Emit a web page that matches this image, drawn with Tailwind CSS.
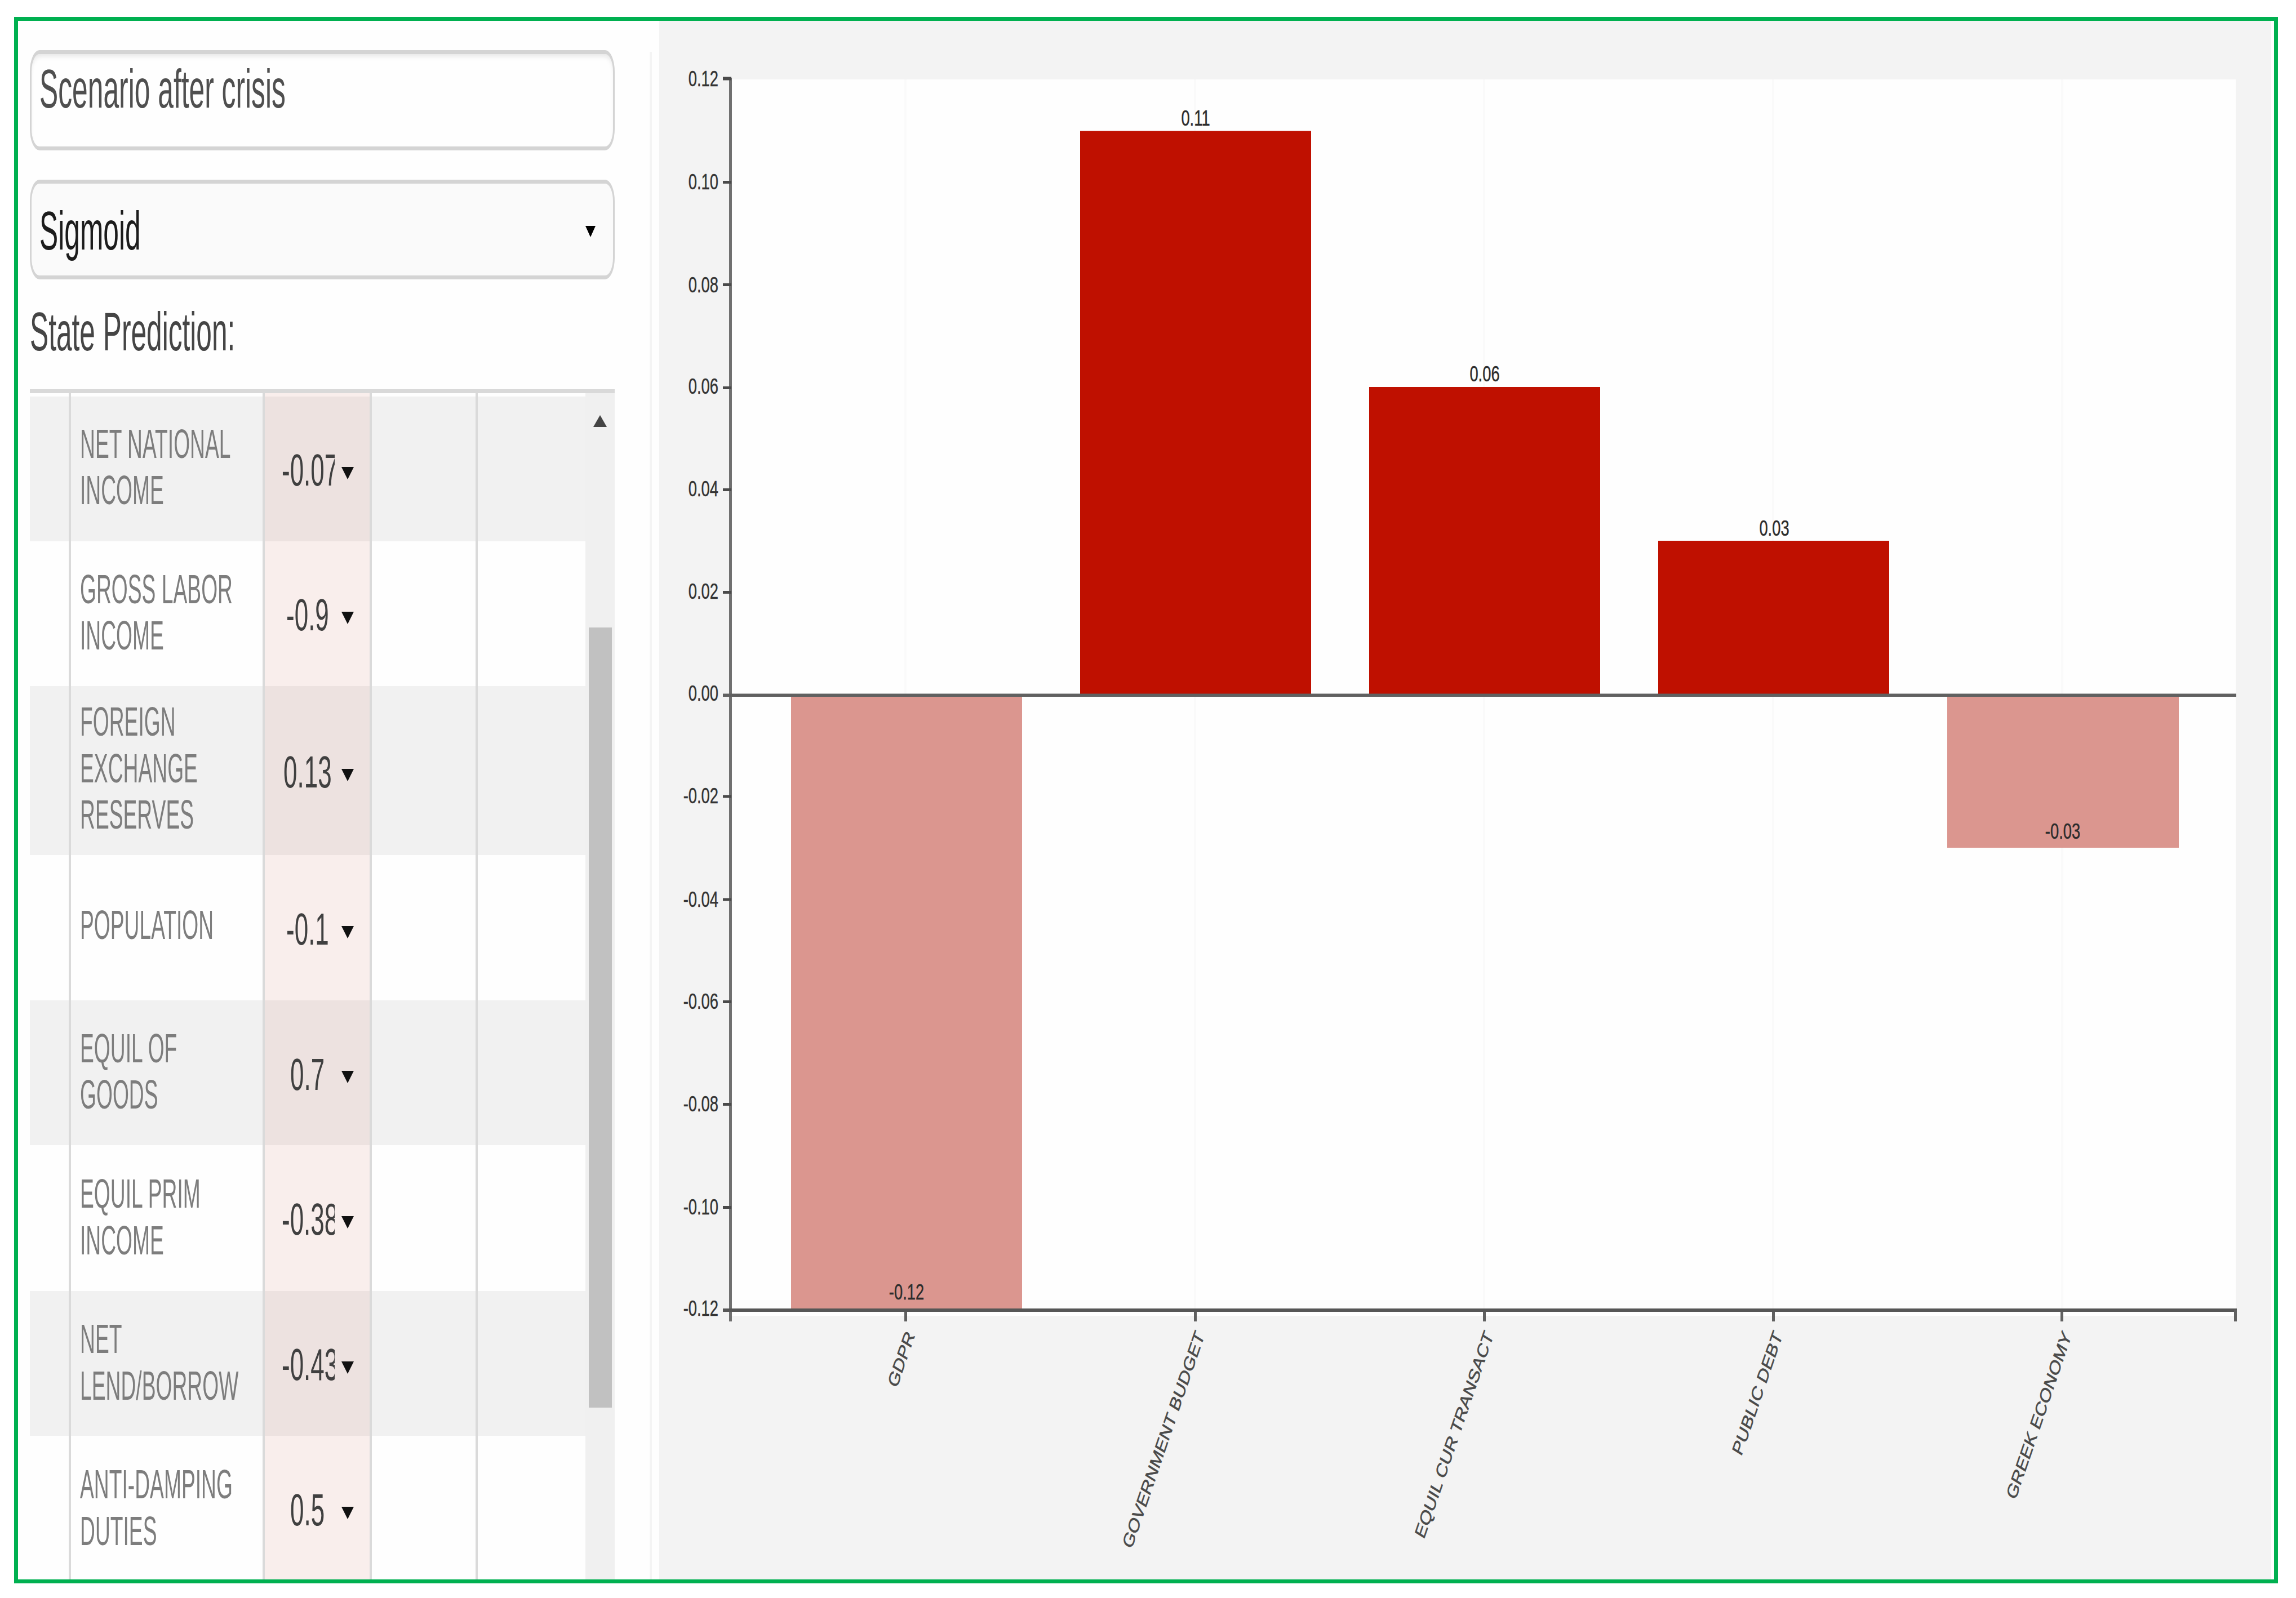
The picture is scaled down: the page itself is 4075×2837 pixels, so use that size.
<!DOCTYPE html>
<html lang="en">
<head>
<meta charset="utf-8">
<title>Scenario after crisis</title>
<script src="https://cdn.jsdelivr.net/npm/@tailwindcss/browser@4"></script>
</head>
<body class="bg-white overflow-hidden font-['Liberation_Sans',Arial,sans-serif]">
<div class="pl-[25px] pt-[30px]">
<main class="flex w-[4018px] h-[2781px] border-7 border-[#00b050] bg-[#fefefe] overflow-hidden">

  <!-- Scenario controls -->
  <section class="flex flex-col w-[1121px] shrink-0 pl-[21px] pt-[52px]">
    <div class="flex items-center w-[1038px] h-[178px] shrink-0 rounded-[17px/38px] border-x-3 border-y-7 border-[#d4d4d4] bg-[#fefefe] pl-[14px] pb-[41px] shadow-[inset_0_7px_8px_-3px_#e6e6e6]">
      <span class="whitespace-nowrap origin-left scale-x-[0.513] text-[97px] leading-none text-[#4f4f4f]">Scenario after crisis</span>
    </div>
    <div class="flex items-center justify-between w-[1038px] h-[177px] shrink-0 mt-[52px] rounded-[17px/38px] border-x-3 border-y-7 border-[#d4d4d4] bg-[#fafafa] pl-[14px] pr-[31px]">
      <span class="whitespace-nowrap origin-left scale-x-[0.513] text-[97px] leading-none text-[#1c1c1c] pt-[3px]">Sigmoid</span>
      <svg class="w-[18px] h-[20px] mt-[6px]" viewBox="0 0 18 20"><path d="M0 0H18L9 20Z" fill="#000"/></svg>
    </div>
    <div class="flex items-center h-[195px] shrink-0 pb-[10px]">
      <span class="whitespace-nowrap origin-left scale-x-[0.512] text-[97px] leading-none text-[#454545]">State Prediction:</span>
    </div>

    <!-- Concept table -->
    <div class="flex w-[1038px] h-[2113px] shrink-0 border-t-7 border-[#d9d9d9] overflow-hidden">
      <div class="w-[986px] shrink-0 text-[72px] leading-[82.4px] text-[#7d7d7d]">
        <div class="flex h-[6px]"><div class="w-[73px] border-r-4 border-[#dadada]"></div><div class="w-[344px] border-r-4 border-[#dadada]"></div><div class="w-[190px] border-r-4 border-[#dadada] bg-[#f9eeec]"></div><div class="w-[188px] border-r-4 border-[#dadada]"></div></div>

        <div class="flex h-[257px] bg-[#f1f1f1]">
          <div class="w-[73px] shrink-0 border-r-4 border-[#dadada]"></div>
          <div class="flex items-center w-[344px] shrink-0 border-r-4 border-[#dadada] pl-[16px] pb-[7px]"><span class="shrink-0 whitespace-nowrap origin-left scale-x-[0.517]">NET NATIONAL<br>INCOME</span></div>
          <div class="flex items-center w-[190px] shrink-0 border-r-4 border-[#dadada] bg-[#ede2e0] pl-[30px]">
            <div class="flex w-[94px] overflow-hidden pt-[6px]"><span class="shrink-0 origin-left scale-x-[0.55] text-[80px] text-[#404040]">-0.07</span></div>
            <svg class="w-[22px] h-[22px] ml-[12px] mt-[15px]" viewBox="0 0 22 22"><path d="M0 0H22L11 22Z" fill="#111"/></svg>
          </div>
          <div class="w-[188px] shrink-0 border-r-4 border-[#dadada]"></div>
        </div>

        <div class="flex h-[257px] bg-[#fefefe]">
          <div class="w-[73px] shrink-0 border-r-4 border-[#dadada]"></div>
          <div class="flex items-center w-[344px] shrink-0 border-r-4 border-[#dadada] pl-[16px] pb-[5px]"><span class="shrink-0 whitespace-nowrap origin-left scale-x-[0.517]">GROSS LABOR<br>INCOME</span></div>
          <div class="flex items-center w-[190px] shrink-0 border-r-4 border-[#dadada] bg-[#f9eeec] pl-[29px]">
            <div class="flex justify-center w-[94px] pt-[6px]"><span class="shrink-0 scale-x-[0.55] text-[80px] text-[#404040]">-0.9</span></div>
            <svg class="w-[22px] h-[22px] ml-[13px] mt-[15px]" viewBox="0 0 22 22"><path d="M0 0H22L11 22Z" fill="#111"/></svg>
          </div>
          <div class="w-[188px] shrink-0 border-r-4 border-[#dadada]"></div>
        </div>

        <div class="flex h-[300px] bg-[#f1f1f1]">
          <div class="w-[73px] shrink-0 border-r-4 border-[#dadada]"></div>
          <div class="flex items-center w-[344px] shrink-0 border-r-4 border-[#dadada] pl-[16px] pb-[8px]"><span class="shrink-0 whitespace-nowrap origin-left scale-x-[0.517]">FOREIGN<br>EXCHANGE<br>RESERVES</span></div>
          <div class="flex items-center w-[190px] shrink-0 border-r-4 border-[#dadada] bg-[#ede2e0] pl-[29px]">
            <div class="flex justify-center w-[94px] pt-[6px]"><span class="shrink-0 scale-x-[0.55] text-[80px] text-[#404040]">0.13</span></div>
            <svg class="w-[22px] h-[22px] ml-[13px] mt-[15px]" viewBox="0 0 22 22"><path d="M0 0H22L11 22Z" fill="#111"/></svg>
          </div>
          <div class="w-[188px] shrink-0 border-r-4 border-[#dadada]"></div>
        </div>

        <div class="flex h-[258px] bg-[#fefefe]">
          <div class="w-[73px] shrink-0 border-r-4 border-[#dadada]"></div>
          <div class="flex items-center w-[344px] shrink-0 border-r-4 border-[#dadada] pl-[16px] pb-[9px]"><span class="shrink-0 whitespace-nowrap origin-left scale-x-[0.517]">POPULATION</span></div>
          <div class="flex items-center w-[190px] shrink-0 border-r-4 border-[#dadada] bg-[#f9eeec] pl-[29px]">
            <div class="flex justify-center w-[94px] pt-[6px]"><span class="shrink-0 scale-x-[0.55] text-[80px] text-[#404040]">-0.1</span></div>
            <svg class="w-[22px] h-[22px] ml-[13px] mt-[15px]" viewBox="0 0 22 22"><path d="M0 0H22L11 22Z" fill="#111"/></svg>
          </div>
          <div class="w-[188px] shrink-0 border-r-4 border-[#dadada]"></div>
        </div>

        <div class="flex h-[257px] bg-[#f1f1f1]">
          <div class="w-[73px] shrink-0 border-r-4 border-[#dadada]"></div>
          <div class="flex items-center w-[344px] shrink-0 border-r-4 border-[#dadada] pl-[16px] pb-[5px]"><span class="shrink-0 whitespace-nowrap origin-left scale-x-[0.517]">EQUIL OF<br>GOODS</span></div>
          <div class="flex items-center w-[190px] shrink-0 border-r-4 border-[#dadada] bg-[#ede2e0] pl-[29px]">
            <div class="flex justify-center w-[94px] pt-[7px]"><span class="shrink-0 scale-x-[0.55] text-[80px] text-[#404040]">0.7</span></div>
            <svg class="w-[22px] h-[22px] ml-[13px] mt-[15px]" viewBox="0 0 22 22"><path d="M0 0H22L11 22Z" fill="#111"/></svg>
          </div>
          <div class="w-[188px] shrink-0 border-r-4 border-[#dadada]"></div>
        </div>

        <div class="flex h-[259px] bg-[#fefefe]">
          <div class="w-[73px] shrink-0 border-r-4 border-[#dadada]"></div>
          <div class="flex items-center w-[344px] shrink-0 border-r-4 border-[#dadada] pl-[16px] pb-[4px]"><span class="shrink-0 whitespace-nowrap origin-left scale-x-[0.517]">EQUIL PRIM<br>INCOME</span></div>
          <div class="flex items-center w-[190px] shrink-0 border-r-4 border-[#dadada] bg-[#f9eeec] pl-[30px]">
            <div class="flex w-[94px] overflow-hidden pt-[6px]"><span class="shrink-0 origin-left scale-x-[0.55] text-[80px] text-[#404040]">-0.38</span></div>
            <svg class="w-[22px] h-[22px] ml-[12px] mt-[15px]" viewBox="0 0 22 22"><path d="M0 0H22L11 22Z" fill="#111"/></svg>
          </div>
          <div class="w-[188px] shrink-0 border-r-4 border-[#dadada]"></div>
        </div>

        <div class="flex h-[257px] bg-[#f1f1f1]">
          <div class="w-[73px] shrink-0 border-r-4 border-[#dadada]"></div>
          <div class="flex items-center w-[344px] shrink-0 border-r-4 border-[#dadada] pl-[16px] pb-[4px]"><span class="shrink-0 whitespace-nowrap origin-left scale-x-[0.517]">NET<br>LEND/BORROW</span></div>
          <div class="flex items-center w-[190px] shrink-0 border-r-4 border-[#dadada] bg-[#ede2e0] pl-[30px]">
            <div class="flex w-[94px] overflow-hidden pt-[6px]"><span class="shrink-0 origin-left scale-x-[0.55] text-[80px] text-[#404040]">-0.43</span></div>
            <svg class="w-[22px] h-[22px] ml-[12px] mt-[15px]" viewBox="0 0 22 22"><path d="M0 0H22L11 22Z" fill="#111"/></svg>
          </div>
          <div class="w-[188px] shrink-0 border-r-4 border-[#dadada]"></div>
        </div>

        <div class="flex h-[257px] bg-[#fefefe]">
          <div class="w-[73px] shrink-0 border-r-4 border-[#dadada]"></div>
          <div class="flex items-center w-[344px] shrink-0 border-r-4 border-[#dadada] pl-[16px] pb-[2px]"><span class="shrink-0 whitespace-nowrap origin-left scale-x-[0.517]">ANTI-DAMPING<br>DUTIES</span></div>
          <div class="flex items-center w-[190px] shrink-0 border-r-4 border-[#dadada] bg-[#f9eeec] pl-[29px]">
            <div class="flex justify-center w-[94px] pt-[7px]"><span class="shrink-0 scale-x-[0.55] text-[80px] text-[#404040]">0.5</span></div>
            <svg class="w-[22px] h-[22px] ml-[13px] mt-[16px]" viewBox="0 0 22 22"><path d="M0 0H22L11 22Z" fill="#111"/></svg>
          </div>
          <div class="w-[188px] shrink-0 border-r-4 border-[#dadada]"></div>
        </div>
      </div>

      <!-- Scrollbar -->
      <div class="flex flex-col items-center w-[52px] shrink-0 bg-[#f0f0f0] pt-[39px]">
        <svg class="w-[24px] h-[21px] shrink-0" viewBox="0 0 24 20" preserveAspectRatio="none"><path d="M12 0L24 20H0Z" fill="#444"/></svg>
        <div class="w-[41px] h-[1385px] mt-[356px] shrink-0 bg-[#c1c1c1]"></div>
      </div>
    </div>
  </section>

  <div class="w-1 shrink-0 mt-[55px] bg-[#f4f4f4]"></div>

  <!-- Bar chart -->
  <section class="w-[2861px] shrink-0 ml-[13px] bg-[#f3f3f3]">
    <svg class="block w-[2861px] h-[2767px]" viewBox="1170 37 2861 2767">
      <rect x="1297" y="141" width="2671" height="2195" fill="#fefefe"/>
      <g fill="#fafafa">
        <rect x="1605" y="141" width="4" height="2182"/><rect x="2119" y="141" width="4" height="2182"/><rect x="2632" y="141" width="4" height="2182"/><rect x="3145" y="141" width="4" height="2182"/><rect x="3658" y="141" width="4" height="2182"/>
      </g>
      <g fill="#bf1000">
        <rect x="1917" y="232.5" width="410" height="1001"/>
        <rect x="2430" y="687" width="410" height="546"/>
        <rect x="2943" y="960" width="410" height="273"/>
      </g>
      <g fill="#db968f">
        <rect x="1404" y="1234" width="410" height="1090"/>
        <rect x="3456" y="1234" width="411" height="271"/>
      </g>
      <rect x="1294" y="138" width="5" height="2208" fill="#707070"/>
      <rect x="1283" y="1231.500" width="2686" height="5.500" fill="#606060"/>
      <rect x="1283" y="2323" width="2687" height="6" fill="#565656"/>
      <g fill="#4a4a4a">
        <rect x="1283" y="136.500" width="15" height="6"/><rect x="1283" y="321" width="15" height="5"/><rect x="1283" y="503" width="15" height="5"/><rect x="1283" y="686" width="15" height="5"/><rect x="1283" y="867" width="15" height="5"/><rect x="1283" y="1049" width="15" height="5"/>
        <rect x="1283" y="1411.500" width="15" height="5"/><rect x="1283" y="1594.500" width="15" height="5"/><rect x="1283" y="1776" width="15" height="5"/><rect x="1283" y="1958" width="15" height="5"/><rect x="1283" y="2141" width="15" height="5"/>
      </g>
      <g fill="#606060">
        <rect x="1605" y="2329" width="5" height="17"/><rect x="2119" y="2329" width="5" height="17"/><rect x="2632" y="2329" width="5" height="17"/><rect x="3145" y="2329" width="5" height="17"/><rect x="3657" y="2329" width="5" height="17"/><rect x="3965" y="2325" width="5" height="21"/>
      </g>
      <g font-size="38.500" fill="#333" stroke="#333" stroke-width=".5" text-anchor="end">
        <text transform="translate(1275 153) scale(.71 1)">0.12</text>
        <text transform="translate(1275 336) scale(.71 1)">0.10</text>
        <text transform="translate(1275 519) scale(.71 1)">0.08</text>
        <text transform="translate(1275 699) scale(.71 1)">0.06</text>
        <text transform="translate(1275 881) scale(.71 1)">0.04</text>
        <text transform="translate(1275 1063) scale(.71 1)">0.02</text>
        <text transform="translate(1275 1244) scale(.71 1)">0.00</text>
        <text transform="translate(1275 1426) scale(.71 1)">-0.02</text>
        <text transform="translate(1275 1610) scale(.71 1)">-0.04</text>
        <text transform="translate(1275 1791) scale(.71 1)">-0.06</text>
        <text transform="translate(1275 1973) scale(.71 1)">-0.08</text>
        <text transform="translate(1275 2156) scale(.71 1)">-0.10</text>
        <text transform="translate(1275 2336) scale(.71 1)">-0.12</text>
      </g>
      <g font-size="38.500" fill="#2c2c2c" stroke="#2c2c2c" stroke-width=".5" text-anchor="middle">
        <text transform="translate(1609 2307) scale(.71 1)">-0.12</text>
        <text transform="translate(2122 223) scale(.71 1)">0.11</text>
        <text transform="translate(2635 676.500) scale(.71 1)">0.06</text>
        <text transform="translate(3149 950.500) scale(.71 1)">0.03</text>
        <text transform="translate(3661 1489) scale(.71 1)">-0.03</text>
      </g>
      <g font-size="36" fill="#4a4a4a" stroke="#4a4a4a" stroke-width=".7" text-anchor="end">
        <text transform="matrix(.311 -.912 .68 .43 1624 2371)">GDPR</text>
        <text transform="matrix(.311 -.912 .68 .43 2138 2371)">GOVERNMENT BUDGET</text>
        <text transform="matrix(.311 -.912 .68 .43 2651 2371)">EQUIL CUR TRANSACT</text>
        <text transform="matrix(.311 -.912 .68 .43 3164 2371)">PUBLIC DEBT</text>
        <text transform="matrix(.311 -.912 .68 .43 3677 2371)">GREEK ECONOMY</text>
      </g>
    </svg>
  </section>
</main>
</div>
</body>
</html>
